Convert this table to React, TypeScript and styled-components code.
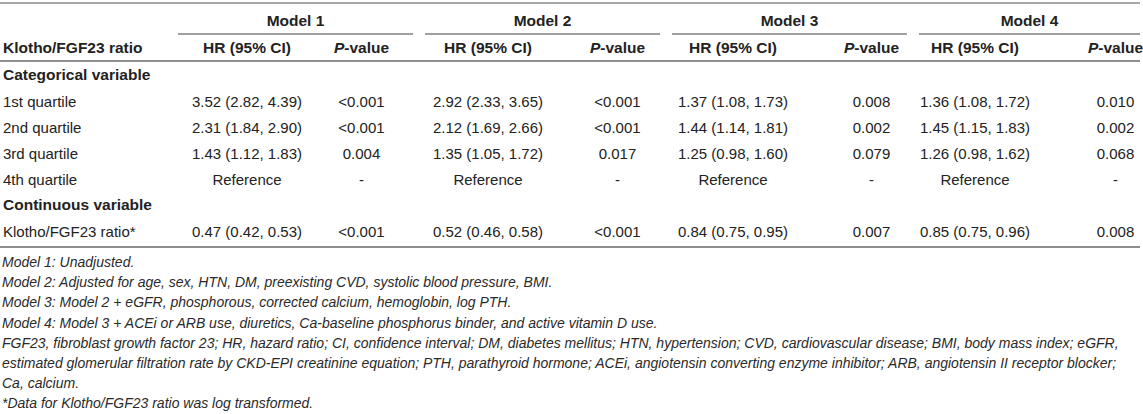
import React from "react";
import styled, { createGlobalStyle } from "styled-components";

const GlobalStyle = createGlobalStyle`
  html, body {
    margin: 0;
    padding: 0;
    background: #ffffff;
  }
  body {
    font-family: "Liberation Sans", Arial, Helvetica, sans-serif;
    color: #222222;
  }
`;

const COLS = "172px repeat(3, 150px 97px) 130px 97px";

/* horizontal nudge of each value column's centre (px), in column order */
const SHIFTS = [0, -9, -6, 0, -8, 7, -3, 24];

const Page = styled.div`
  width: 1143px;
  padding-top: 2px;
`;

const Table = styled.div`
  width: 1140px;
  border-top: 2px solid #a8a8a8;
  border-bottom: 2px solid #8e8e8e;
  padding-bottom: 2px;
  font-size: 15px;
`;

const GroupRow = styled.div`
  display: grid;
  grid-template-columns: ${COLS};
  height: 31px;
  align-items: end;
`;

const GroupHead = styled.div<{ $last?: boolean }>`
  grid-column: span 2;
  margin: 0 ${(p) => (p.$last ? "0" : "6px")} 0 6px;
  border-bottom: 2px solid #a0a0a0;
  text-align: center;
  font-size: 15.5px;
  font-weight: 700;
  padding-bottom: 3px;
  line-height: 18px;
`;

const HeadRow = styled.div`
  display: grid;
  grid-template-columns: ${COLS};
  height: 27px;
  box-sizing: border-box;
  padding-bottom: 3px;
  align-items: end;
  border-bottom: 2px solid #8e8e8e;
  font-size: 15.5px;
  font-weight: 700;
`;

const BodyRow = styled.div`
  display: grid;
  grid-template-columns: ${COLS};
  height: 26px;
  align-items: center;
`;

const Label = styled.div<{ $bold?: boolean }>`
  padding-left: 3px;
  white-space: nowrap;
  font-weight: ${(p) => (p.$bold ? 700 : 400)};
  font-size: ${(p) => (p.$bold ? "15.5px" : "15px")};
`;

const Section = styled(Label)`
  grid-column: 1 / -1;
`;

const Cell = styled.div<{ $shift: number }>`
  display: flex;
  justify-content: center;
  white-space: nowrap;
  padding-left: ${(p) => Math.max(0, p.$shift * 2)}px;
  padding-right: ${(p) => Math.max(0, -p.$shift * 2)}px;
`;

const Notes = styled.div`
  width: 1140px;
  padding: 4px 0 0 2px;
  font-size: 14px;
  font-style: italic;
  line-height: 20.2px;
  color: #2a2a2a;
`;

const Note = styled.p`
  margin: 0;
`;

const PValue = () => (
  <span>
    <i>P</i>-value
  </span>
);

type Row = { label: string; values: string[] };

const categorical: Row[] = [
  { label: "1st quartile", values: ["3.52 (2.82, 4.39)", "<0.001", "2.92 (2.33, 3.65)", "<0.001", "1.37 (1.08, 1.73)", "0.008", "1.36 (1.08, 1.72)", "0.010"] },
  { label: "2nd quartile", values: ["2.31 (1.84, 2.90)", "<0.001", "2.12 (1.69, 2.66)", "<0.001", "1.44 (1.14, 1.81)", "0.002", "1.45 (1.15, 1.83)", "0.002"] },
  { label: "3rd quartile", values: ["1.43 (1.12, 1.83)", "0.004", "1.35 (1.05, 1.72)", "0.017", "1.25 (0.98, 1.60)", "0.079", "1.26 (0.98, 1.62)", "0.068"] },
  { label: "4th quartile", values: ["Reference", "-", "Reference", "-", "Reference", "-", "Reference", "-"] },
];

const continuous: Row[] = [
  { label: "Klotho/FGF23 ratio*", values: ["0.47 (0.42, 0.53)", "<0.001", "0.52 (0.46, 0.58)", "<0.001", "0.84 (0.75, 0.95)", "0.007", "0.85 (0.75, 0.96)", "0.008"] },
];

const DataRow = ({ row }: { row: Row }) => (
  <BodyRow>
    <Label>{row.label}</Label>
    {row.values.map((v, i) => (
      <Cell key={i} $shift={SHIFTS[i]}>
        {v}
      </Cell>
    ))}
  </BodyRow>
);

export default function App() {
  const models = ["Model 1", "Model 2", "Model 3", "Model 4"];
  return (
    <Page>
      <GlobalStyle />
      <Table>
        <GroupRow>
          <div />
          {models.map((m, i) => (
            <GroupHead key={m} $last={i === models.length - 1}>
              {m}
            </GroupHead>
          ))}
        </GroupRow>
        <HeadRow>
          <Label $bold>Klotho/FGF23 ratio</Label>
          {models.map((m, i) => (
            <React.Fragment key={m}>
              <Cell $shift={SHIFTS[i * 2]}>HR (95% CI)</Cell>
              <Cell $shift={SHIFTS[i * 2 + 1]}>
                <PValue />
              </Cell>
            </React.Fragment>
          ))}
        </HeadRow>
        <BodyRow>
          <Section $bold>Categorical variable</Section>
        </BodyRow>
        {categorical.map((r) => (
          <DataRow key={r.label} row={r} />
        ))}
        <BodyRow>
          <Section $bold>Continuous variable</Section>
        </BodyRow>
        {continuous.map((r) => (
          <DataRow key={r.label} row={r} />
        ))}
      </Table>
      <Notes>
        <Note>Model 1: Unadjusted.</Note>
        <Note>Model 2: Adjusted for age, sex, HTN, DM, preexisting CVD, systolic blood pressure, BMI.</Note>
        <Note>Model 3: Model 2 + eGFR, phosphorous, corrected calcium, hemoglobin, log PTH.</Note>
        <Note>Model 4: Model 3 + ACEi or ARB use, diuretics, Ca-baseline phosphorus binder, and active vitamin D use.</Note>
        <Note>
          FGF23, fibroblast growth factor 23; HR, hazard ratio; CI, confidence interval; DM, diabetes mellitus; HTN, hypertension; CVD, cardiovascular disease; BMI, body mass index; eGFR,
          <br />
          estimated glomerular filtration rate by CKD-EPI creatinine equation; PTH, parathyroid hormone; ACEi, angiotensin converting enzyme inhibitor; ARB, angiotensin II receptor blocker;
          <br />
          Ca, calcium.
        </Note>
        <Note>*Data for Klotho/FGF23 ratio was log transformed.</Note>
      </Notes>
    </Page>
  );
}
